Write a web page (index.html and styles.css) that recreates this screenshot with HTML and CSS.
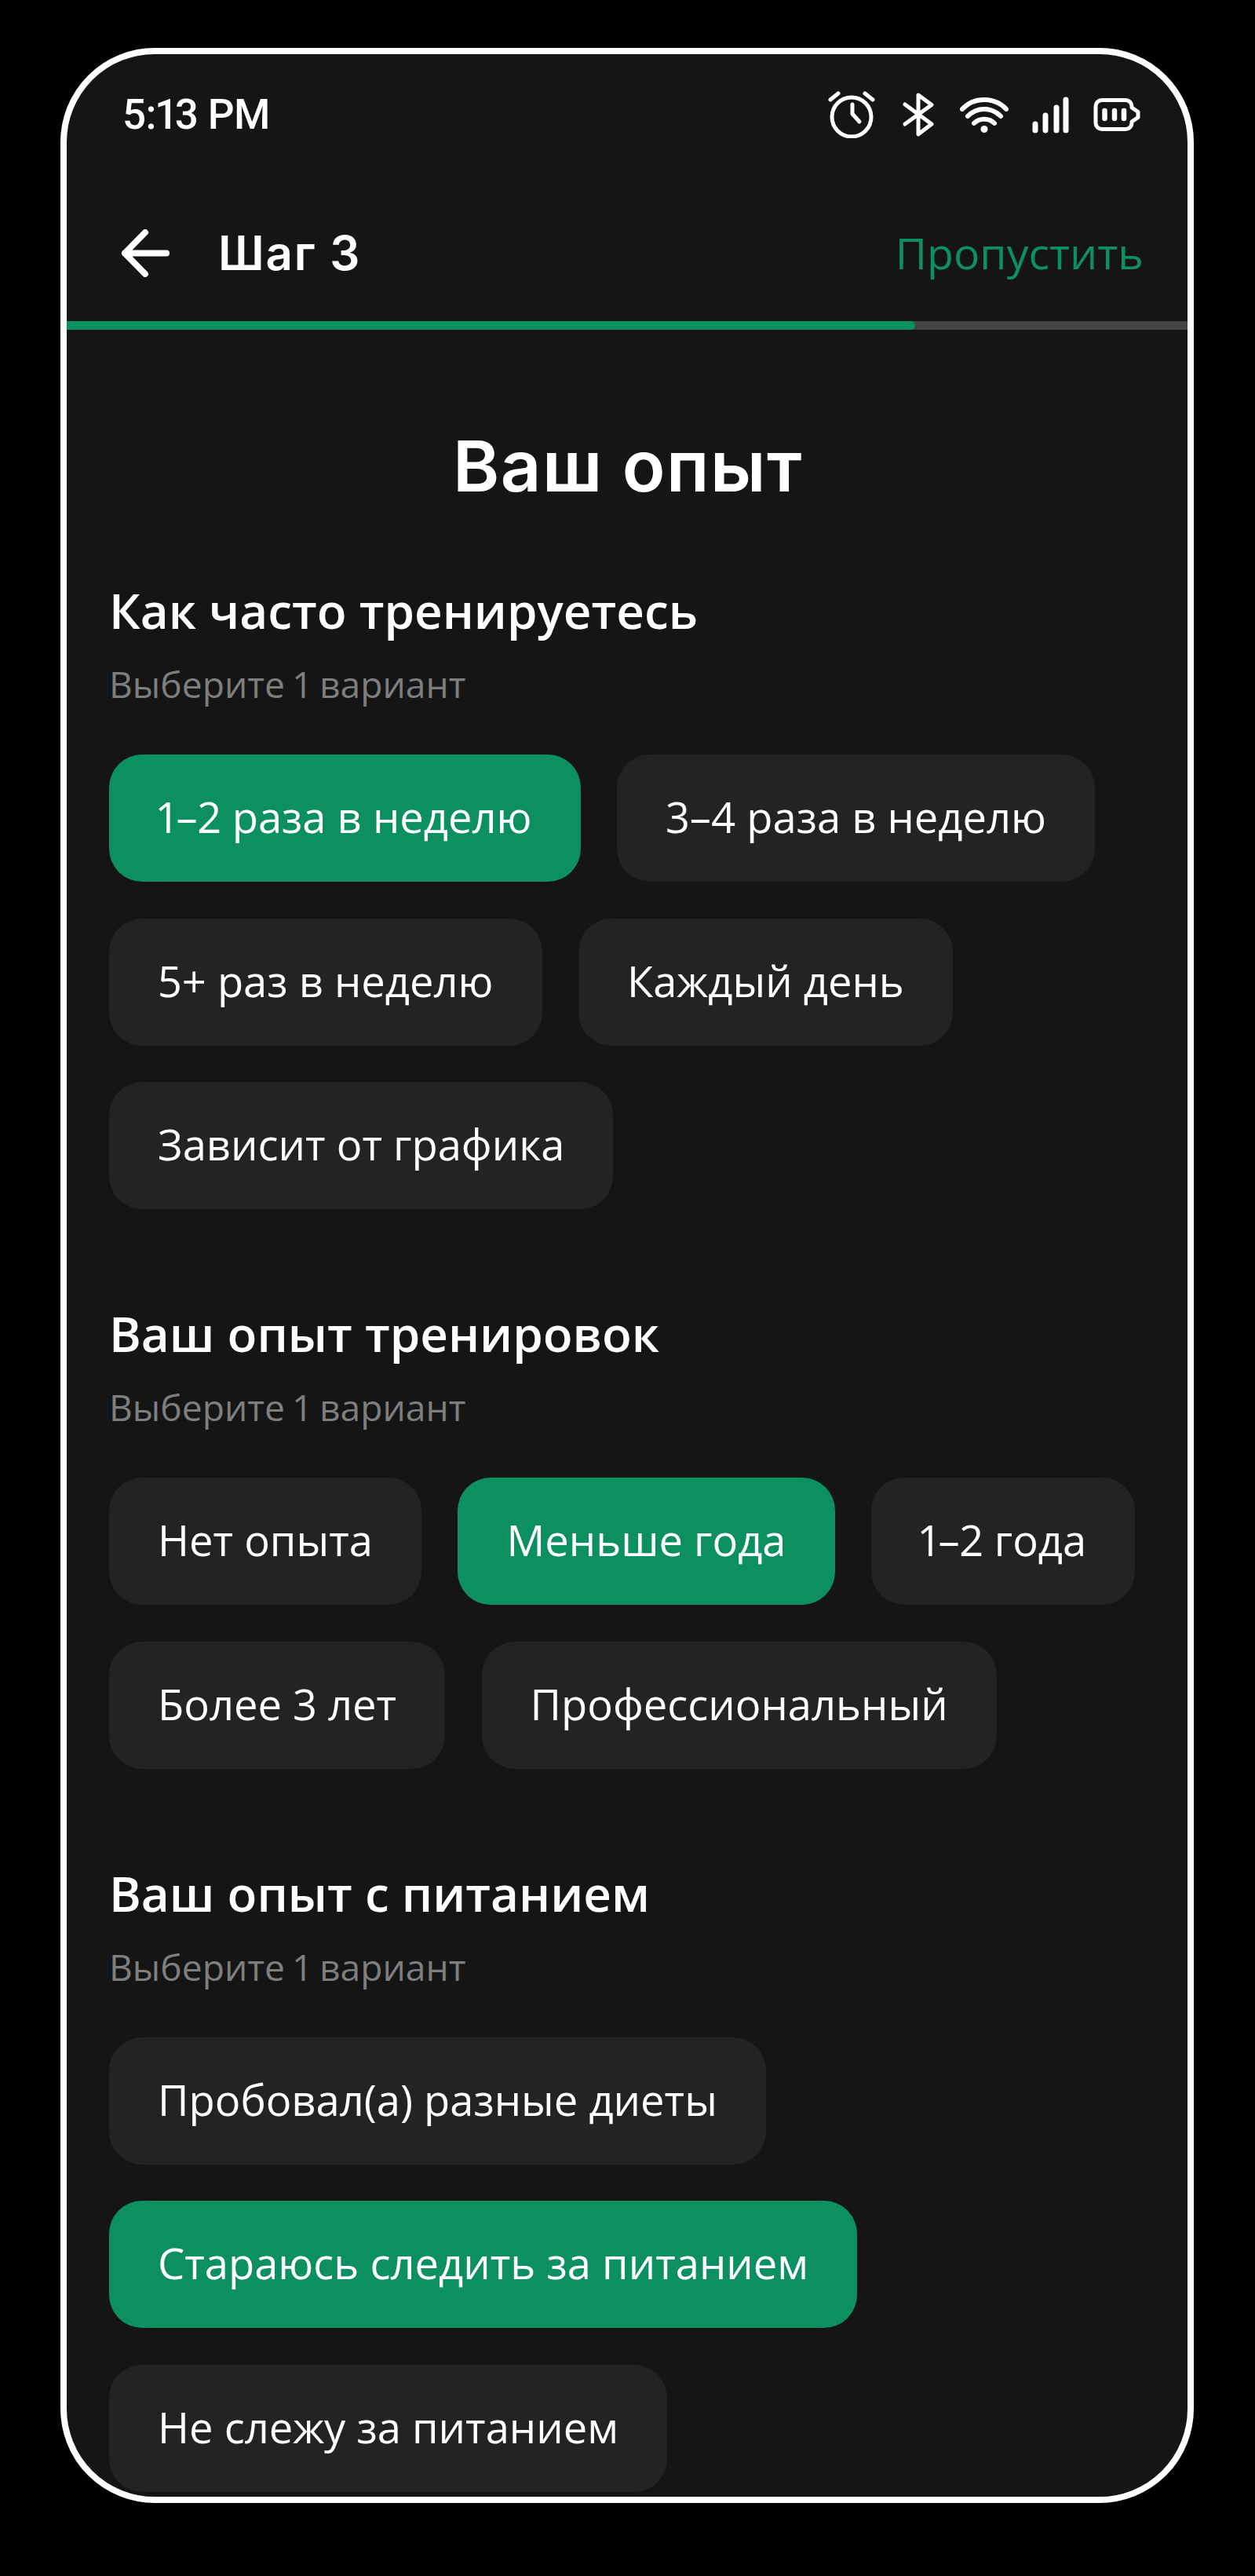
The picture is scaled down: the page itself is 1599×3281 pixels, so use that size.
FILE: index.html
```html
<!DOCTYPE html>
<html lang="ru">
<head>
  <meta charset="UTF-8" />
  <title>Шаг 3</title>
  <link rel="stylesheet" href="styles.css">
</head>
<body>
  <div class="phone">
    <div class="status-bar">
      <span class="time">5:13 PM</span>
      <div class="status-icons">
        <svg class="icon-alarm" width="60" height="60" viewBox="0 0 60 60" fill="none" stroke="#fff" stroke-width="5" stroke-linecap="round" stroke-linejoin="round">
          <circle cx="30" cy="33" r="25"/>
          <path d="M31 17v12l9 10"/>
          <path d="M3 11l10-8M57 11L47 3"/>
        </svg>
        <svg class="icon-bt" width="40" height="56" viewBox="0 0 40 56" fill="none" stroke="#fff" stroke-width="5" stroke-linecap="round" stroke-linejoin="round">
          <path d="M3 15l34 25-17 13V3l17 12.5L3 40"/>
        </svg>
        <svg class="icon-wifi" width="62" height="46" viewBox="0 0 62 46" fill="none" stroke="#fff" stroke-width="6" stroke-linecap="round">
          <path d="M3 16C18 0 44 0 59 16"/>
          <path d="M10 25c12-12 30-12 42 0"/>
          <path d="M18 34c7-7 19-7 26 0"/>
          <circle cx="31" cy="41.5" r="4.5" fill="#fff" stroke="none"/>
        </svg>
        <svg class="icon-signal" width="47" height="48" viewBox="0 0 47 48" fill="none" stroke="#fff" stroke-width="7" stroke-linecap="round">
          <path d="M4 36v8M17 25v19M31 15v29M43 5v39"/>
        </svg>
        <svg class="icon-battery" width="60" height="42" viewBox="0 0 60 42" fill="none" stroke="#fff" stroke-linecap="round" stroke-linejoin="round">
          <path d="M11 2.5h30a8 8 0 0 1 8 8V12l8 5.5v7L49 30v1.5a8 8 0 0 1-8 8H11a8 8 0 0 1-8-8v-21a8 8 0 0 1 8-8z" stroke-width="5"/>
          <path d="M14.5 16v10M27 16v10M39 16v10" stroke-width="6.5"/>
        </svg>
      </div>
    </div>

    <div class="nav-bar">
      <svg class="back" width="62" height="61" viewBox="0 0 62 61" fill="none" stroke="#fff" stroke-width="8" stroke-linecap="round" stroke-linejoin="round">
        <path d="M58 30.5H5M31 4L5 30.5 31 57"/>
      </svg>
      <span class="nav-title">Шаг 3</span>
      <span class="skip">Пропустить</span>
    </div>

    <div class="progress"><div class="progress-fill"></div></div>

    <main class="content">
      <h1 class="title">Ваш опыт</h1>

      <section class="group">
        <h2>Как часто тренируетесь</h2>
        <p class="hint">Выберите 1 вариант</p>
        <div class="chips">
          <span class="chip active">1–2 раза в неделю</span>
          <span class="chip">3–4 раза в неделю</span>
          <span class="chip">5+ раз в неделю</span>
          <span class="chip">Каждый день</span>
          <span class="chip">Зависит от графика</span>
        </div>
      </section>

      <section class="group">
        <h2>Ваш опыт тренировок</h2>
        <p class="hint">Выберите 1 вариант</p>
        <div class="chips">
          <span class="chip">Нет опыта</span>
          <span class="chip active">Меньше года</span>
          <span class="chip">1–2 года</span>
          <span class="chip">Более 3 лет</span>
          <span class="chip">Профессиональный</span>
        </div>
      </section>

      <section class="group">
        <h2>Ваш опыт с питанием</h2>
        <p class="hint">Выберите 1 вариант</p>
        <div class="chips">
          <span class="chip">Пробовал(а) разные диеты</span>
          <span class="chip active">Стараюсь следить за питанием</span>
          <span class="chip">Не слежу за питанием</span>
        </div>
      </section>
    </main>
  </div>
</body>
</html>
```

FILE: styles.css
```css
:root {
  --bg: #151515;
  --green: #0c9060;
  --chip: #232325;
  --hint: #7e7e7e;
}

html, body {
  margin: 0;
  padding: 0;
  background: #000;
}

body {
  width: 1599px;
  height: 3281px;
  overflow: hidden;
  padding-top: 61px;
  box-sizing: border-box;
  font-family: "Open Sans", "Noto Sans", sans-serif;
  font-variant-numeric: proportional-nums;
  color: #fff;
}

.phone {
  width: 1444px;
  height: 3127px;
  margin-left: 77px;
  box-sizing: border-box;
  border: 8px solid #fff;
  border-radius: 120px;
  background: var(--bg);
  overflow: hidden;
}

.status-bar {
  height: 166px;
  display: flex;
  align-items: center;
  justify-content: space-between;
  padding: 0 60px 12px 71px;
  box-sizing: border-box;
}

.time {
  font-family: "Roboto", sans-serif;
  font-size: 53px;
  font-weight: 500;
  letter-spacing: -0.6px;
}

.status-icons {
  display: flex;
  align-items: center;
  gap: 30px;
}

.icon-alarm {
  margin-right: 5px;
}

.icon-bt {
  margin-right: 3px;
}

.icon-signal {
  margin-right: 1px;
}

.nav-bar {
  height: 174px;
  display: flex;
  align-items: center;
  padding: 0 56px 0 69px;
  box-sizing: border-box;
}

.back {
  flex: none;
}

.nav-title {
  margin-left: 62px;
  font-family: "Inter", sans-serif;
  font-size: 60px;
  font-weight: 600;
  letter-spacing: 1.8px;
}

.skip {
  margin-left: auto;
  margin-bottom: 2px;
  color: var(--green);
  font-size: 55.4px;
}

.progress {
  height: 11px;
  background: #444446;
}

.progress-fill {
  width: 1081px;
  height: 100%;
  background: var(--green);
  border-radius: 0 6px 6px 0;
}

.content {
  padding: 0 0 0 54px;
}

.title {
  margin: 0 52px 88px 0;
  padding-top: 124px;
  text-align: center;
  font-family: "Inter", sans-serif;
  font-size: 90px;
  font-weight: 600;
  letter-spacing: 1.5px;
  line-height: 100px;
}

.group {
  margin-bottom: 113px;
}

.group h2 {
  margin: 0;
  font-size: 62px;
  font-weight: 600;
  line-height: 90px;
}

.hint {
  margin: 20px 0 59px;
  color: var(--hint);
  font-size: 46.2px;
  line-height: 60px;
}

.chips {
  display: flex;
  flex-wrap: wrap;
  gap: 46.5px;
}

.chip {
  display: block;
  height: 162px;
  padding: 0 62px;
  box-sizing: border-box;
  border-radius: 42px;
  background: var(--chip);
  font-size: 54.3px;
  line-height: 158px;
}

.chip.active {
  background: var(--green);
}
```
